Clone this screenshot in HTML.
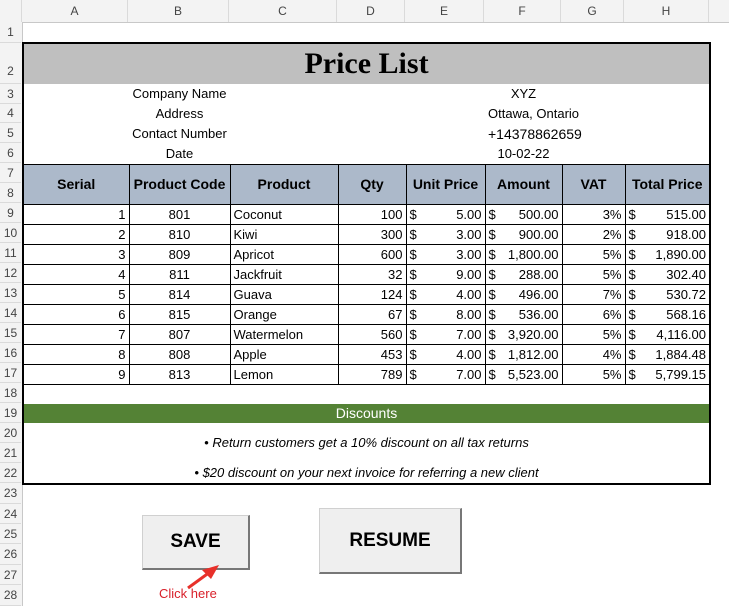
<!DOCTYPE html>
<html><head><style>
body{margin:0;width:729px;height:606px;overflow:hidden;background:#fff;font-family:"Liberation Sans",sans-serif;position:relative}
.ch{position:absolute;top:0;height:22px;background:#f3f3f3;border-bottom:1px solid #c8c8c8;left:0;width:729px}
.ch div{position:absolute;top:0;height:22px;line-height:22px;text-align:center;font-size:12px;color:#444;border-right:1px solid #dadada;box-sizing:border-box}
.rh{position:absolute;left:0;width:22px;background:#f3f3f3;border-right:1px solid #c8c8c8;top:22px;height:584px}
.rh div{position:absolute;left:0;width:21px;text-align:center;font-size:12px;color:#444;border-bottom:1px solid #dadada;box-sizing:border-box}
table{position:absolute;left:22px;top:42px;border-collapse:collapse;table-layout:fixed;width:687px;font-size:13px}
td{padding:0 3px;height:19px;line-height:19px;white-space:nowrap;overflow:hidden;border:none}
.i td{height:20px;line-height:20px}
.d td{border:1px solid #000}
.r{text-align:right}.c{text-align:center}
.hd td{background:#acb9ca;font-weight:bold;text-align:center;border:1px solid #000;font-size:14px}
.dl{display:flex;justify-content:space-between}
.btn{position:absolute;background:#efefef;border:1px solid #d0d0d0;border-right:2px solid #777;border-bottom:2px solid #777;font-weight:bold;font-size:19px;text-align:center;box-sizing:border-box}
</style></head><body>
<div class="ch">
<div style="left:0;width:22px"></div>
<div style="left:22px;width:106px">A</div><div style="left:128px;width:101px">B</div><div style="left:229px;width:108px">C</div><div style="left:337px;width:68px">D</div><div style="left:405px;width:79px">E</div><div style="left:484px;width:77px">F</div><div style="left:561px;width:63px">G</div><div style="left:624px;width:85px">H</div>
</div>
<div class="rh">
<div style="top:0;height:21px;line-height:21px">1</div>
<div style="top:21px;height:41px;line-height:56px">2</div>
<div style="top:62px;height:20px;line-height:20px">3</div>
<div style="top:82px;height:19px;line-height:19px">4</div>
<div style="top:101px;height:20px;line-height:20px">5</div>
<div style="top:121px;height:20px;line-height:20px">6</div>
<div style="top:141px;height:20px;line-height:20px">7</div>
<div style="top:161px;height:20px;line-height:20px">8</div>
<div style="top:181px;height:20px;line-height:20px">9</div>
<div style="top:201px;height:20px;line-height:20px">10</div>
<div style="top:221px;height:20px;line-height:20px">11</div>
<div style="top:241px;height:20px;line-height:20px">12</div>
<div style="top:261px;height:20px;line-height:20px">13</div>
<div style="top:281px;height:20px;line-height:20px">14</div>
<div style="top:301px;height:20px;line-height:20px">15</div>
<div style="top:321px;height:20px;line-height:20px">16</div>
<div style="top:341px;height:20px;line-height:20px">17</div>
<div style="top:361px;height:20px;line-height:20px">18</div>
<div style="top:381px;height:20px;line-height:20px">19</div>
<div style="top:401px;height:20px;line-height:20px">20</div>
<div style="top:421px;height:20px;line-height:20px">21</div>
<div style="top:441px;height:20px;line-height:20px">22</div>
<div style="top:461px;height:21px;line-height:21px">23</div>
<div style="top:482px;height:20px;line-height:20px">24</div>
<div style="top:502px;height:20px;line-height:20px">25</div>
<div style="top:522px;height:21px;line-height:21px">26</div>
<div style="top:543px;height:20px;line-height:20px">27</div>
<div style="top:563px;height:21px;line-height:21px">28</div>
</div>

<table style="border:2px solid #000">
<colgroup><col style="width:106px"><col style="width:101px"><col style="width:108px"><col style="width:68px"><col style="width:79px"><col style="width:77px"><col style="width:63px"><col style="width:85px"></colgroup>
<tr><td colspan="8" style="background:#bfbfbf;height:40px;text-align:center;font-family:'Liberation Serif',serif;font-weight:bold;font-size:30px;line-height:40px">Price List</td></tr>
<tr class="i"><td></td><td class="c" style="overflow:visible">Company Name</td><td></td><td colspan="2"></td><td class="c">XYZ</td><td colspan="2"></td></tr>
<tr class="i"><td></td><td class="c">Address</td><td></td><td colspan="2"></td><td class="c" style="overflow:visible">Ottawa, Ontario</td><td colspan="2"></td></tr>
<tr class="i"><td></td><td class="c" style="overflow:visible">Contact Number</td><td></td><td colspan="2"></td><td class="c" style="overflow:visible;font-size:14px">+14378862659</td><td colspan="2"></td></tr>
<tr class="i"><td></td><td class="c">Date</td><td></td><td colspan="2"></td><td class="c">10-02-22</td><td colspan="2"></td></tr>
<tr class="hd"><td rowspan="2" style="height:39px">Serial</td><td rowspan="2">Product Code</td><td rowspan="2">Product</td><td rowspan="2">Qty</td><td rowspan="2">Unit Price</td><td rowspan="2">Amount</td><td rowspan="2">VAT</td><td rowspan="2">Total Price</td></tr>
<tr></tr>
<tr class="d"><td class="r">1</td><td class="c">801</td><td>Coconut</td><td class="r">100</td><td><div class="dl"><span>$</span><span>5.00</span></div></td><td><div class="dl"><span>$</span><span>500.00</span></div></td><td class="r">3%</td><td><div class="dl"><span>$</span><span>515.00</span></div></td></tr>
<tr class="d"><td class="r">2</td><td class="c">810</td><td>Kiwi</td><td class="r">300</td><td><div class="dl"><span>$</span><span>3.00</span></div></td><td><div class="dl"><span>$</span><span>900.00</span></div></td><td class="r">2%</td><td><div class="dl"><span>$</span><span>918.00</span></div></td></tr>
<tr class="d"><td class="r">3</td><td class="c">809</td><td>Apricot</td><td class="r">600</td><td><div class="dl"><span>$</span><span>3.00</span></div></td><td><div class="dl"><span>$</span><span>1,800.00</span></div></td><td class="r">5%</td><td><div class="dl"><span>$</span><span>1,890.00</span></div></td></tr>
<tr class="d"><td class="r">4</td><td class="c">811</td><td>Jackfruit</td><td class="r">32</td><td><div class="dl"><span>$</span><span>9.00</span></div></td><td><div class="dl"><span>$</span><span>288.00</span></div></td><td class="r">5%</td><td><div class="dl"><span>$</span><span>302.40</span></div></td></tr>
<tr class="d"><td class="r">5</td><td class="c">814</td><td>Guava</td><td class="r">124</td><td><div class="dl"><span>$</span><span>4.00</span></div></td><td><div class="dl"><span>$</span><span>496.00</span></div></td><td class="r">7%</td><td><div class="dl"><span>$</span><span>530.72</span></div></td></tr>
<tr class="d"><td class="r">6</td><td class="c">815</td><td>Orange</td><td class="r">67</td><td><div class="dl"><span>$</span><span>8.00</span></div></td><td><div class="dl"><span>$</span><span>536.00</span></div></td><td class="r">6%</td><td><div class="dl"><span>$</span><span>568.16</span></div></td></tr>
<tr class="d"><td class="r">7</td><td class="c">807</td><td>Watermelon</td><td class="r">560</td><td><div class="dl"><span>$</span><span>7.00</span></div></td><td><div class="dl"><span>$</span><span>3,920.00</span></div></td><td class="r">5%</td><td><div class="dl"><span>$</span><span>4,116.00</span></div></td></tr>
<tr class="d"><td class="r">8</td><td class="c">808</td><td>Apple</td><td class="r">453</td><td><div class="dl"><span>$</span><span>4.00</span></div></td><td><div class="dl"><span>$</span><span>1,812.00</span></div></td><td class="r">4%</td><td><div class="dl"><span>$</span><span>1,884.48</span></div></td></tr>
<tr class="d"><td class="r">9</td><td class="c">813</td><td>Lemon</td><td class="r">789</td><td><div class="dl"><span>$</span><span>7.00</span></div></td><td><div class="dl"><span>$</span><span>5,523.00</span></div></td><td class="r">5%</td><td><div class="dl"><span>$</span><span>5,799.15</span></div></td></tr>
<tr><td colspan="8"></td></tr>
<tr><td colspan="8" class="c" style="background:#548235;color:#fff;font-size:14px">Discounts</td></tr>
<tr><td colspan="8" class="c" style="font-style:italic;height:37px;line-height:40px" rowspan="2">• Return customers get a 10% discount on all tax returns</td></tr>
<tr></tr>
<tr><td colspan="8" class="c" style="font-style:italic;height:18px;line-height:20px">• $20 discount on your next invoice for referring a new client</td></tr>
</table>

<div class="btn" style="left:142px;top:515px;width:108px;height:55px;line-height:52px">SAVE</div>
<div class="btn" style="left:319px;top:508px;width:143px;height:66px;line-height:64px">RESUME</div>
<svg style="position:absolute;left:0;top:0" width="729" height="606"><line x1="188" y1="588" x2="210" y2="572" stroke="#e8302a" stroke-width="3"/><polygon points="219,565 202,570 211,579" fill="#e8302a"/></svg>
<div style="position:absolute;left:159px;top:586px;font-size:13px;color:#d9202a">Click here</div>
</body></html>
